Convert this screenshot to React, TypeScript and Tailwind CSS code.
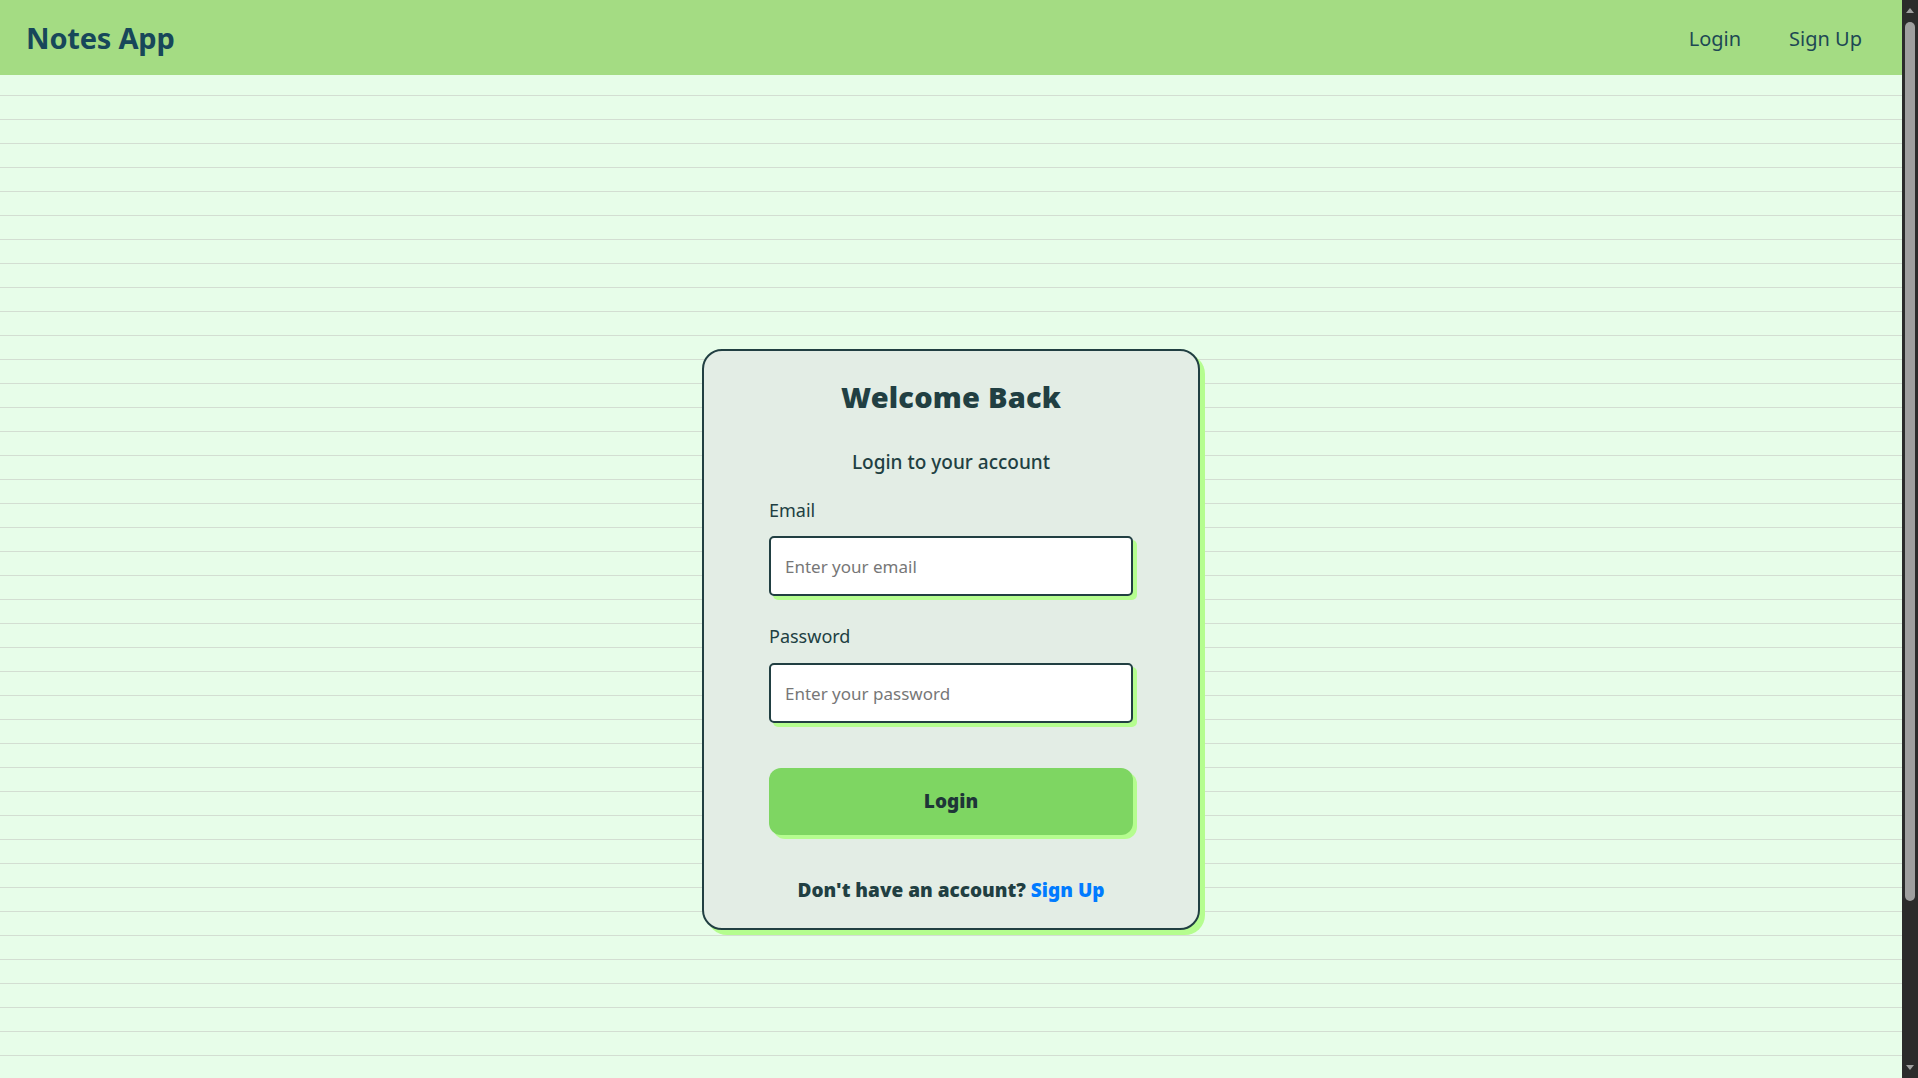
import React from "react";

const ScrollBar = () => (
  <div className="w-[16px] h-screen shrink-0 bg-[#2b2b2b] flex flex-col items-center">
    <svg width="10" height="16" viewBox="0 0 10 16" className="mt-[1px]">
      <path d="M1 12 L5 7 L9 12 Z" fill="#9f9f9f" />
    </svg>
    <div className="mt-[5px] h-[879px] w-[10px] rounded-full bg-[#9f9f9f]" />
    <div className="flex-1" />
    <svg width="10" height="16" viewBox="0 0 10 16" className="mb-[1px]">
      <path d="M1 4 L9 4 L5 9 Z" fill="#9f9f9f" />
    </svg>
  </div>
);

const App = () => {
  return (
    <div className="flex h-screen overflow-hidden">
      <div className="flex-1 overflow-y-auto [scrollbar-width:none]">
        <div className="min-h-full bg-[#e7fde9] bg-[linear-gradient(#e7fde9_23px,#d3ded2_23px,#d3ded2_24px)] bg-[size:100%_24px] font-['Noto_Sans',sans-serif] text-[#213f42]">
          <header className="h-[75px] bg-[#a4dc83] flex items-center justify-between pl-[26px] pr-[40px]">
            <h1 className="text-[29px] font-bold text-[#17475a] tracking-[-0.2px]">Notes App</h1>
            <nav className="flex items-center gap-[48px] text-[20px] text-[#1d4854] pt-[2px]">
              <a href="#">Login</a>
              <a href="#">Sign Up</a>
            </nav>
          </header>

          <main className="flex justify-center pt-[274px] pb-[343px]">
            <div className="w-[498px] h-[581px] rounded-[20px] border-2 border-[#213f42] bg-[#e3ede5] shadow-[5px_5px_0_#b5fd8f] px-[65px] pt-[28px] flex flex-col">
              <h2 className="text-center text-[29px] leading-[36px] font-black tracking-[0.2px]">
                Welcome Back
              </h2>
              <p className="text-center text-[19px] leading-[27px] font-medium mt-[34px]">
                Login to your account
              </p>

              <label className="text-[18px] leading-[27px] mt-[21px]">Email</label>
              <input
                type="email"
                placeholder="Enter your email"
                className="mt-[12px] h-[60px] w-full rounded-[5px] border-2 border-[#213f42] bg-white px-[14px] text-[17px] placeholder:text-[#777777] shadow-[4px_4px_0_#b5fd8f] outline-none"
              />

              <label className="text-[18px] leading-[27px] mt-[27px]">Password</label>
              <input
                type="password"
                placeholder="Enter your password"
                className="mt-[13px] h-[60px] w-full rounded-[5px] border-2 border-[#213f42] bg-white px-[14px] text-[17px] placeholder:text-[#777777] shadow-[4px_4px_0_#b5fd8f] outline-none"
              />

              <button className="mt-[45px] h-[67px] w-full rounded-[12px] bg-[#7ed662] text-[19px] font-black text-[#1e3538] shadow-[4px_4px_0_#b5fd8f]">
                Login
              </button>

              <p className="mt-[41px] text-center text-[19px] leading-[28px] font-black">
                Don't have an account?{" "}
                <a href="#" className="text-[#007bff]">
                  Sign Up
                </a>
              </p>
            </div>
          </main>
        </div>
      </div>
      <ScrollBar />
    </div>
  );
};

export default App;
